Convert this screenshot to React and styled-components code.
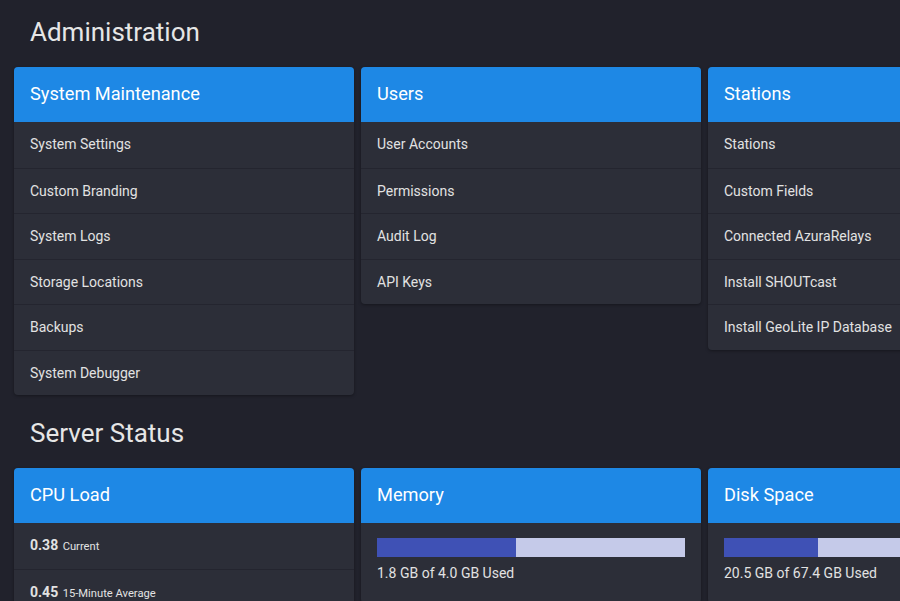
import React from 'react';
import styled, { createGlobalStyle } from 'styled-components';

const GlobalStyle = createGlobalStyle`
  html, body {
    margin: 0;
    padding: 0;
    background: #21222c;
    overflow: hidden;
  }
  body {
    font-family: Roboto, "Liberation Sans", sans-serif;
    color: #e4e4e4;
  }
`;

const Page = styled.div`
  width: 1100px;
  padding: 14px 0 0 14px;
`;

const SectionTitle = styled.h2`
  margin: 0 0 17px;
  padding-left: 16px;
  font-size: 26px;
  font-weight: 400;
  line-height: 36px;
  color: #e6e6e6;
`;

const Section = styled.section`
  margin-bottom: 20px;
`;

const Grid = styled.div`
  display: grid;
  grid-template-columns: repeat(3, 340px);
  column-gap: 7px;
  align-items: start;
`;

const Card = styled.div`
  background: #2c2e38;
  border-radius: 4px;
  overflow: hidden;
  box-shadow: 0 1px 3px rgba(0, 0, 0, 0.35);
`;

const CardHeader = styled.div`
  background: #1e88e5;
  color: #fff;
  font-size: 18.2px;
  line-height: 23px;
  padding: 15px 16px 17px;
`;

const Row = styled.div`
  padding: 12px 16px;
  font-size: 14px;
  line-height: 20.5px;
  color: #e2e2e2;
  border-top: ${p => (p.$first ? 'none' : '1px solid #24252f')};
  height: ${p => (p.$first ? '45.5px' : 'auto')};
  box-sizing: border-box;
`;

const Value = styled.strong`
  font-weight: 700;
  font-size: 14px;
`;

const Small = styled.small`
  font-size: 11.2px;
  margin-left: 1px;
`;

const CardBody = styled.div`
  padding: 15px 16px 20px;
`;

const Bar = styled.div`
  height: 19px;
  background: #c5cae9;
  display: flex;
`;

const BarFill = styled.div`
  background: #3f51b5;
  height: 100%;
`;

const BarLabel = styled.div`
  margin-top: 6px;
  font-size: 14px;
  line-height: 20px;
  color: #e2e2e2;
`;

const adminCards = [
  {
    title: 'System Maintenance',
    items: ['System Settings', 'Custom Branding', 'System Logs', 'Storage Locations', 'Backups', 'System Debugger'],
  },
  {
    title: 'Users',
    items: ['User Accounts', 'Permissions', 'Audit Log', 'API Keys'],
  },
  {
    title: 'Stations',
    items: ['Stations', 'Custom Fields', 'Connected AzuraRelays', 'Install SHOUTcast', 'Install GeoLite IP Database'],
  },
];

const LinkCard = ({ title, items }) => (
  <Card>
    <CardHeader>{title}</CardHeader>
    {items.map((item, i) => (
      <Row key={item} $first={i === 0}>{item}</Row>
    ))}
  </Card>
);

const UsageCard = ({ title, used, total }) => (
  <Card>
    <CardHeader>{title}</CardHeader>
    <CardBody>
      <Bar>
        <BarFill style={{ width: `${(used / total) * 100}%` }} />
      </Bar>
      <BarLabel>{used.toFixed(1)} GB of {total.toFixed(1)} GB Used</BarLabel>
    </CardBody>
  </Card>
);

export default function App() {
  return (
    <>
      <GlobalStyle />
      <Page>
        <Section>
          <SectionTitle>Administration</SectionTitle>
          <Grid>
            {adminCards.map(c => (
              <LinkCard key={c.title} {...c} />
            ))}
          </Grid>
        </Section>
        <Section>
          <SectionTitle>Server Status</SectionTitle>
          <Grid>
            <Card>
              <CardHeader>CPU Load</CardHeader>
              <Row $first>
                <Value>0.38</Value> <Small>Current</Small>
              </Row>
              <Row>
                <Value>0.45</Value> <Small>15-Minute Average</Small>
              </Row>
              <Row>
                <Value>0.41</Value> <Small>5-Minute Average</Small>
              </Row>
            </Card>
            <UsageCard title="Memory" used={1.8} total={4.0} />
            <UsageCard title="Disk Space" used={20.5} total={67.4} />
          </Grid>
        </Section>
      </Page>
    </>
  );
}
